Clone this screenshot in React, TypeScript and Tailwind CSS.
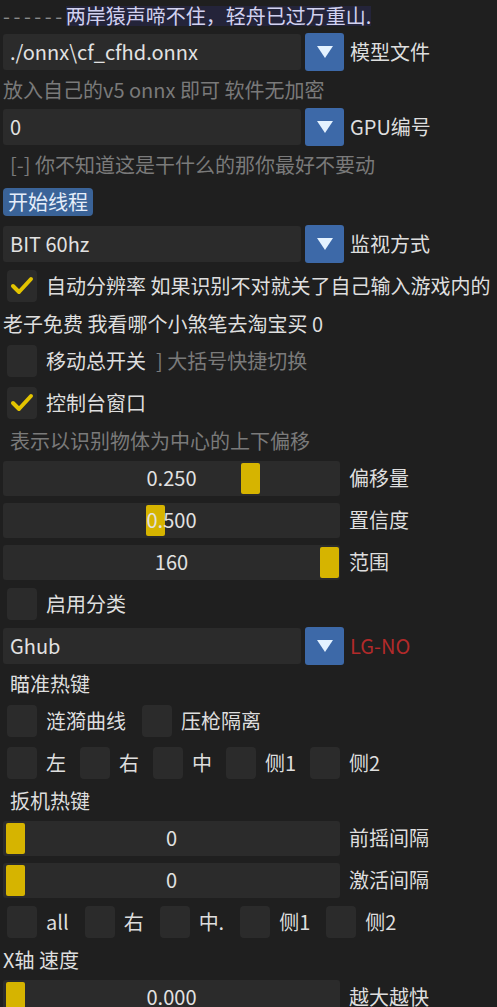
import type { ReactNode } from "react";

const FONT = { fontFamily: '"Noto Sans CJK SC", "Noto Sans", sans-serif' };

function Line({ children, className = "" }: { children: ReactNode; className?: string }) {
    return <div className={`h-[33px] flex items-center whitespace-nowrap ${className}`}>{children}</div>;
}

function Combo({ value, label, labelClass = "text-[#dedede]" }: { value: string; label: string; labelClass?: string }) {
    return (
        <div className="h-[42px] flex items-center">
            <div className="w-[298px] h-[36px] bg-[#2b2b2b] rounded-[3px] flex items-center pl-[7px] text-[#e2e2e2]">
                {value}
            </div>
            <div className="w-[39px] h-[38px] ml-[4px] bg-[#3d69a8] rounded-[3px] flex items-center justify-center">
                <svg width="18" height="14" viewBox="0 0 18 14">
                    <polygon points="1,1 17,1 9,13" fill="#e4f2ff" />
                </svg>
            </div>
            <span className={`ml-[6px] ${labelClass}`}>{label}</span>
        </div>
    );
}

function Slider({ value, grab, label }: { value: string; grab: number; label: string }) {
    return (
        <div className="h-[42px] flex items-center">
            <div className="relative w-[337px] h-[35px] bg-[#2b2b2b] rounded-[3px] flex items-center justify-center text-[#e2e2e2]">
                <div className="absolute top-[2px] w-[19px] h-[31px] bg-[#d6b400] rounded-[2px]" style={{ left: grab }} />
                <span className="relative">{value}</span>
            </div>
            <span className="ml-[9px] text-[#dedede]">{label}</span>
        </div>
    );
}

function Box({ checked = false }: { checked?: boolean }) {
    return (
        <div className="w-[30px] h-[32px] shrink-0 bg-[#2b2b2b] rounded-[4px] flex items-center justify-center">
            {checked && (
                <svg width="24" height="20" viewBox="0 0 24 20">
                    <path d="M3 10 L9 16 L21 3" fill="none" stroke="#e3c400" strokeWidth="4" strokeLinecap="round" strokeLinejoin="round" />
                </svg>
            )}
        </div>
    );
}

function Check({ label, checked = false }: { label: ReactNode; checked?: boolean }) {
    return (
        <div className="flex items-center gap-[9px] whitespace-nowrap">
            <Box checked={checked} />
            <span className="text-[#dedede]">{label}</span>
        </div>
    );
}

function CheckRow({ children, gap = "gap-[14px]" }: { children: ReactNode; gap?: string }) {
    return <div className={`h-[42px] flex items-center pl-[4px] ${gap}`}>{children}</div>;
}

export default function App() {
    return (
        <div className="w-[497px] h-[1007px] overflow-hidden bg-[#1f1f1f] pl-[3px] text-[20px] leading-none" style={FONT}>
            <div className="h-[31px] flex items-center whitespace-nowrap">
                <span className="text-[#8a8a8a] tracking-[3.5px]">------</span>
                <span className="text-[#d2d2f0] bg-[#24243a]">两岸猿声啼不住，轻舟已过万重山.</span>
            </div>

            <Combo value="./onnx\cf_cfhd.onnx" label="模型文件" />
            <Line className="text-[#7a7a7a]">放入自己的v5 onnx 即可 软件无加密</Line>
            <Combo value="0" label="GPU编号" />
            <Line className="pl-[7px] text-[#7a7a7a]">[-] 你不知道这是干什么的那你最好不要动</Line>

            <div className="h-[42px] flex items-center">
                <button className="h-[28px] px-[5px] bg-[#3a6398] rounded-[4px] text-[#e6eefa] leading-none">开始线程</button>
            </div>

            <Combo value="BIT 60hz" label="监视方式" />
            <CheckRow>
                <Check checked label="自动分辨率 如果识别不对就关了自己输入游戏内的" />
            </CheckRow>
            <Line className="text-[#dedede]">老子免费 我看哪个小煞笔去淘宝买 0</Line>
            <CheckRow>
                <Check
                    label={
                        <>
                            移动总开关<span className="ml-[10px] text-[#7a7a7a]">] 大括号快捷切换</span>
                        </>
                    }
                />
            </CheckRow>
            <CheckRow>
                <Check checked label="控制台窗口" />
            </CheckRow>
            <Line className="pl-[7px] text-[#7a7a7a]">表示以识别物体为中心的上下偏移</Line>

            <Slider value="0.250" grab={238} label="偏移量" />
            <Slider value="0.500" grab={143} label="置信度" />
            <Slider value="160" grab={317} label="范围" />

            <CheckRow>
                <Check label="启用分类" />
            </CheckRow>
            <Combo value="Ghub" label="LG-NO" labelClass="text-[#b22a2a]" />

            <Line className="pl-[7px] text-[#dedede]">瞄准热键</Line>
            <CheckRow gap="gap-[16px]">
                <Check label="涟漪曲线" />
                <Check label="压枪隔离" />
            </CheckRow>
            <CheckRow>
                <Check label="左" />
                <Check label="右" />
                <Check label="中" />
                <Check label="侧1" />
                <Check label="侧2" />
            </CheckRow>

            <Line className="pl-[7px] text-[#dedede]">扳机热键</Line>
            <Slider value="0" grab={3} label="前摇间隔" />
            <Slider value="0" grab={3} label="激活间隔" />
            <CheckRow gap="gap-[16px]">
                <Check label="all" />
                <Check label="右" />
                <Check label="中." />
                <Check label="侧1" />
                <Check label="侧2" />
            </CheckRow>

            <Line className="text-[#dedede]">X轴 速度</Line>
            <Slider value="0.000" grab={3} label="越大越快" />
        </div>
    );
}
